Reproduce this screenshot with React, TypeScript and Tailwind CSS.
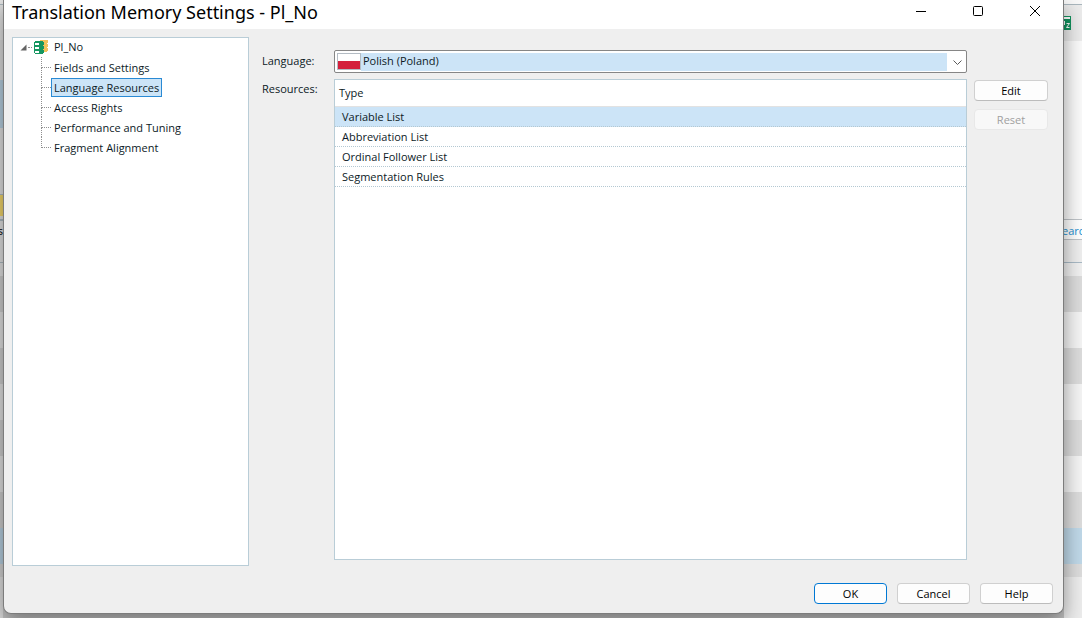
import { useState } from 'react';

const treeItems = [
  'Fields and Settings',
  'Language Resources',
  'Access Rights',
  'Performance and Tuning',
  'Fragment Alignment',
];

const resources = ['Variable List', 'Abbreviation List', 'Ordinal Follower List', 'Segmentation Rules'];

function TreeConnector({ last }: { last: boolean }) {
  return (
    <span className="flex w-[10px] shrink-0 flex-col self-stretch">
      <span className="h-[11px] border-b border-l border-dotted border-[#909090]" />
      {!last && <span className="flex-1 border-l border-dotted border-[#909090]" />}
    </span>
  );
}

function MemoryIcon() {
  return (
    <svg width="15" height="14" viewBox="0 0 15 14" shapeRendering="crispEdges" className="shrink-0">
      <path d="M6 0h8v3h-1v1h1v3h-1v1h1v3h-1v1H6z" fill="#f2c15c" />
      <path d="M1 1h8v1h1v3H9v1h1v3H9v1h1v3H9v1H1v-1H0V2h1z" fill="#159660" />
      <path d="M1 3h4v2H1zM1 7h4v2H1zM1 11h4v2H1z" fill="#fff" />
    </svg>
  );
}

function DialogButton({ label, primary = false, disabled = false }: { label: string; primary?: boolean; disabled?: boolean }) {
  return (
    <button
      type="button"
      disabled={disabled}
      className={`h-[21px] rounded-[4px] border text-center leading-[19px] ${
        primary
          ? 'border-[#0078d4] bg-[#fdfdfd] text-black'
          : disabled
            ? 'border-[#e8e8e8] bg-[#f8f8f8] text-[#a0a0a0]'
            : 'border-[#d0d0d0] border-b-[#bcbcbc] bg-[#fdfdfd] text-black'
      }`}
    >
      {label}
    </button>
  );
}

function LeftStrip() {
  return (
    <div className="w-[3px] shrink-0 overflow-hidden bg-[#dcdcdc]">
      <div className="h-[5px] border-b border-[#a9b6bd] bg-[#e4e4e4]" />
      <div className="h-[35px] bg-[#dedede]" />
      <div className="h-10 bg-[#d6d6d6]" />
      <div className="h-12 bg-[#b3cbdc]" />
      <div className="h-[66px] bg-[#dadada]" />
      <div className="h-[22px] border-t border-[#a9b6bd] bg-[#ecd068]" />
      <div className="h-[5px] border-b-2 border-[#a9b6bd]" />
      <div className="flex h-[42px] justify-end border-b border-[#a9b6bd] leading-[20px] text-black">s</div>
      <div className="h-[13px]" />
      <div className="h-9 bg-[#c9c9c9]" />
      <div className="h-9" />
      <div className="h-9 bg-[#c9c9c9]" />
      <div className="h-9" />
      <div className="h-9 bg-[#c9c9c9]" />
      <div className="h-9" />
      <div className="h-9 bg-[#c9c9c9]" />
      <div className="h-9 bg-[#b3cbdc]" />
      <div className="h-[13px] bg-[#cfcfcf]" />
    </div>
  );
}

function RightStrip() {
  return (
    <div className="w-[18px] shrink-0 overflow-hidden bg-[#ececec]">
      <div className="h-[5px] border-b border-[#a9b6bd] bg-[#f8f8f8]" />
      <div className="h-9 bg-[#ebebeb] pt-[11px]">
        <svg width="7" height="14" viewBox="0 0 7 14" className="block">
          <path d="M0 0h7v14H0z" fill="#12935e" />
          <path d="M0 1h6v2H0z" fill="#fff" />
          <path d="M2.5 7.5h3l-3 4h3M0.5 5v4" fill="none" stroke="#fff" />
        </svg>
      </div>
      <div className="h-[178px] bg-[#fafafa]" />
      <div className="h-[21px] border-y border-[#bfc4c8] bg-white leading-[22px] text-[#1b8fd0]">
        <span className="-ml-[2px]">earc</span>
      </div>
      <div className="h-[23px] border-b border-[#a9bac6] bg-[#eeeeee]" />
      <div className="h-[13px] bg-[#f0f0f0]" />
      <div className="h-9 bg-[#dcdcdc]" />
      <div className="h-9 bg-[#f4f4f4]" />
      <div className="h-9 bg-[#dcdcdc]" />
      <div className="h-9 bg-[#f4f4f4]" />
      <div className="h-9 bg-[#dcdcdc]" />
      <div className="h-9 bg-[#f4f4f4]" />
      <div className="h-9 bg-[#dcdcdc]" />
      <div className="h-9 bg-[#bfd8e8]" />
      <div className="h-[13px] bg-[#dcdcdc]" />
    </div>
  );
}

export default function App() {
  const [page, setPage] = useState('Language Resources');
  const [resource, setResource] = useState('Variable List');
  const [language, setLanguage] = useState('pl');

  return (
    <div className="flex h-screen min-h-[400px] overflow-hidden bg-[#c4c4c4] font-['Open_Sans','Noto_Sans',sans-serif] text-[11px] leading-5 text-[#0c1a26]">
      <LeftStrip />

      <div className="relative mb-1 flex min-w-0 flex-1 flex-col overflow-hidden rounded-b-[8px] border-x border-b border-[#7c7c7c] bg-[#efefef] shadow-[0_8px_20px_rgba(0,0,0,0.4)]">
        <header className="flex h-[29px] shrink-0 items-center justify-between bg-white pl-2">
          <h1 className="pb-[6px] font-['Noto_Sans','Open_Sans',sans-serif] text-[18px] leading-6 text-black">
            Translation Memory Settings - Pl_No
          </h1>
          <div className="flex pb-[7px]">
            <button type="button" aria-label="Minimize" className="flex h-[22px] w-14 items-center justify-center">
              <svg width="10" height="10" viewBox="0 0 10 10" stroke="#000" fill="none">
                <path d="M0 5.5h10" />
              </svg>
            </button>
            <button type="button" aria-label="Maximize" className="flex h-[22px] w-[58px] items-center justify-center">
              <svg width="10" height="10" viewBox="0 0 10 10" stroke="#000" fill="none">
                <rect x="0.5" y="0.5" width="9" height="9" rx="1" />
              </svg>
            </button>
            <button type="button" aria-label="Close" className="flex h-[22px] w-14 items-center justify-center">
              <svg width="10" height="10" viewBox="0 0 10 10" stroke="#000" fill="none">
                <path d="M0 0l10 10M10 0L0 10" />
              </svg>
            </button>
          </div>
        </header>

        <div className="flex min-h-0 flex-1 pt-2 pl-2">
          <nav className="w-[237px] shrink-0 border border-[#b9cdd7] bg-white">
            <div className="mb-px flex h-[18px] items-center pl-[7px]">
              <svg width="7" height="7" viewBox="0 0 7 7" className="shrink-0">
                <path d="M6.5 0.5v6h-6z" fill="#646464" />
              </svg>
              <span className="mr-[2px] ml-px w-[4px] border-t border-dotted border-[#909090]" />
              <MemoryIcon />
              <span className="ml-[5px]">Pl_No</span>
            </div>
            <ul className="pl-7">
              {treeItems.map((item, i) => (
                <li key={item} className="flex h-5 items-end">
                  <TreeConnector last={i === treeItems.length - 1} />
                  <button
                    type="button"
                    onClick={() => setPage(item)}
                    className={`h-[19px] border px-[2px] leading-4 ${
                      item === page ? 'border-[#2a8ad4] bg-[#cce4f7]' : 'border-transparent'
                    }`}
                  >
                    {item}
                  </button>
                </li>
              ))}
            </ul>
          </nav>

          <main className="grid min-w-0 flex-1 grid-cols-[72px_1fr_81px] grid-rows-[23px_1fr] gap-y-[6px] pt-[13px] pr-[15px] pb-[6px] pl-[13px]">
            <label htmlFor="language" className="leading-[22px]">
              Language:
            </label>
            <div className="flex items-center rounded-[2px] border border-[#868686] bg-white pl-[2px]">
              <svg width="24" height="17" viewBox="0 0 24 17" shapeRendering="crispEdges" className="shrink-0">
                <path d="M0 0h24v17H0z" fill="#b4bcc4" />
                <path d="M1 1h22v7H1z" fill="#fff" />
                <path d="M1 8h22v8H1z" fill="#d4213d" />
              </svg>
              <select
                id="language"
                value={language}
                onChange={(e) => setLanguage(e.target.value)}
                className="h-[18px] min-w-0 flex-1 appearance-none bg-[#cce4f7] pb-[2px] pl-[2px] leading-4 outline-none"
              >
                <option value="pl">Polish (Poland)</option>
                <option value="no">Norwegian</option>
              </select>
              <svg width="19" height="20" viewBox="0 0 19 20" fill="none" stroke="#5a5a5a" className="shrink-0">
                <path d="M6.5 8.5l4 4 4-4" />
              </svg>
            </div>
            <span />

            <span id="resources-label">Resources:</span>
            <div className="border border-[#b9cdd7] bg-white">
              <table aria-labelledby="resources-label" className="w-full border-separate border-spacing-0 text-left">
                <thead>
                  <tr>
                    <th className="h-[27px] border-b border-[#e2e2e2] pl-1 font-normal">Type</th>
                  </tr>
                </thead>
                <tbody>
                  {resources.map((name) => (
                    <tr
                      key={name}
                      onClick={() => setResource(name)}
                      className={name === resource ? 'bg-[#cce4f7]' : ''}
                    >
                      <td className="h-5 border-b border-dotted border-[#b4c8d2] pb-px pl-[7px] leading-[17px]">{name}</td>
                    </tr>
                  ))}
                </tbody>
              </table>
            </div>
            <div className="flex flex-col gap-2 pt-px pl-[7px]">
              <DialogButton label="Edit" />
              <DialogButton label="Reset" disabled />
            </div>
          </main>
        </div>

        <footer className="grid shrink-0 grid-cols-[73px_73px_73px] justify-end gap-[10px] pt-[17px] pr-[10px] pb-[9px]">
          <DialogButton label="OK" primary />
          <DialogButton label="Cancel" />
          <DialogButton label="Help" />
        </footer>
      </div>

      <RightStrip />
    </div>
  );
}
